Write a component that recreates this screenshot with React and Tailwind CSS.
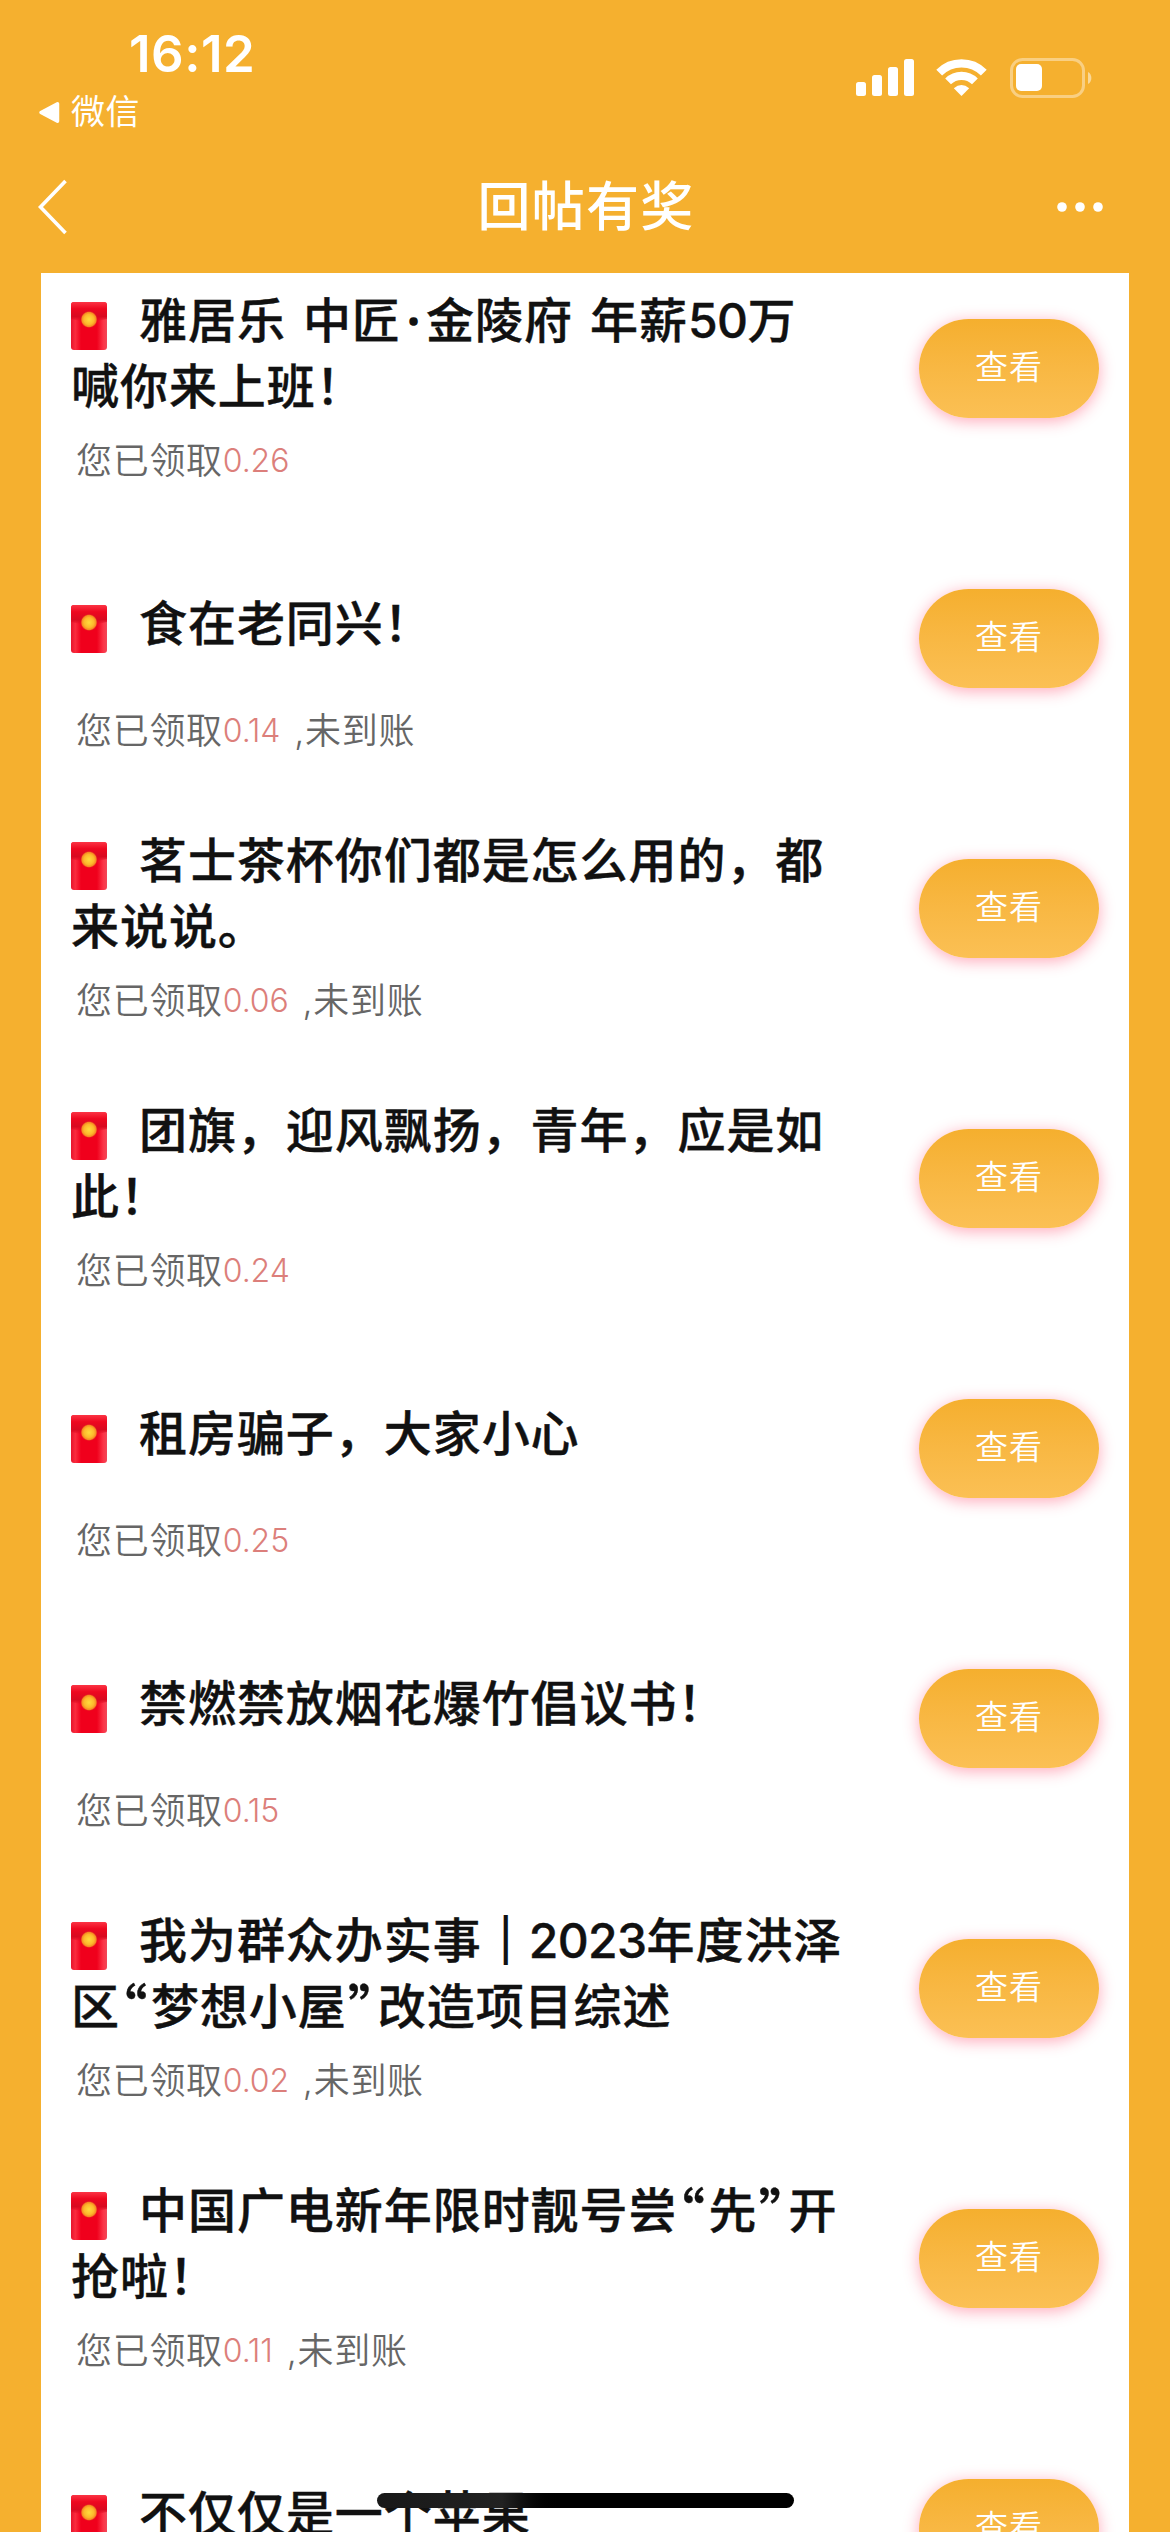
const rows = [
  { lines: ['雅居乐 中匠·金陵府 年薪50万', '喊你来上班！'], amount: '0.26' },
  { lines: ['食在老同兴！'], amount: '0.14', pending: true },
  { lines: ['茗士茶杯你们都是怎么用的，都', '来说说。'], amount: '0.06', pending: true },
  { lines: ['团旗，迎风飘扬，青年，应是如', '此！'], amount: '0.24' },
  { lines: ['租房骗子，大家小心'], amount: '0.25' },
  { lines: ['禁燃禁放烟花爆竹倡议书！'], amount: '0.15' },
  { lines: ['我为群众办实事｜2023年度洪泽', '区“梦想小屋”改造项目综述'], amount: '0.02', pending: true },
  { lines: ['中国广电新年限时靓号尝“先”开', '抢啦！'], amount: '0.11', pending: true },
  { lines: ['不仅仅是一个苹果'] },
];

function Envelope() {
  return (
    <svg className="mt-[14px] mr-[32px] h-[48px] w-[36px] shrink-0" viewBox="0 0 36 48">
      <defs>
        <linearGradient id="envBody" x1="0" x2="1" y1="0" y2="0">
          <stop offset="0" stopColor="#e6142c" />
          <stop offset="0.12" stopColor="#fa2c3e" />
          <stop offset="0.28" stopColor="#f0001c" />
          <stop offset="0.72" stopColor="#f0001c" />
          <stop offset="0.9" stopColor="#fb3447" />
          <stop offset="1" stopColor="#f04858" />
        </linearGradient>
        <linearGradient id="envFlap" x1="0" x2="0" y1="0" y2="1">
          <stop offset="0" stopColor="#fb3444" />
          <stop offset="0.35" stopColor="#ee0820" />
          <stop offset="0.75" stopColor="#d80a20" />
          <stop offset="1" stopColor="#e0081f" stopOpacity="0" />
        </linearGradient>
        <radialGradient id="envCoin">
          <stop offset="0" stopColor="#ffdc3c" />
          <stop offset="0.6" stopColor="#fdb82c" />
          <stop offset="0.85" stopColor="#f68a22" />
          <stop offset="1" stopColor="#e8301c" stopOpacity="0.3" />
        </radialGradient>
      </defs>
      <rect width="36" height="48" rx="3" fill="url(#envBody)" />
      <path d="M3 0H33Q36 0 36 3V17Q18 22 0 17V3Q0 0 3 0Z" fill="url(#envFlap)" />
      <circle cx="18" cy="17.500" r="8.400" fill="url(#envCoin)" />
    </svg>
  );
}

const glyphStyles = {
  '“': "inline-block h-[66px] w-[31px] pr-[3px] text-center align-top text-[54px] tracking-normal font-['Noto_Sans_CJK_SC'] [font-feature-settings:'halt']",
  '”': "inline-block h-[66px] w-[31px] pr-[2px] text-center align-top text-[54px] tracking-normal font-['Noto_Sans_CJK_SC'] [font-feature-settings:'halt']",
  '·': 'inline-block w-[25px] text-center tracking-normal [-webkit-text-stroke:1.5px_#111]',
  '｜': 'inline-block w-[47px] [-webkit-text-stroke:2px_#111]',
};

function TitleText({ text }) {
  return (
    <span>
      {text.split(/([“”·｜]|\d+)/).map((part, i) => (
        <span key={i} className={/^\d+$/.test(part) ? 'tracking-[-0.6px]' : glyphStyles[part]}>
          {part}
        </span>
      ))}
    </span>
  );
}

function Row({ lines, amount, pending }) {
  return (
    <li className="flex h-[270px] shrink-0 justify-between pt-[15px] pr-[30px] pl-[30px]">
      <div className="flex flex-col">
        <h2 className="flex h-[132px] flex-col justify-center text-[48px] leading-[66px] font-medium tracking-[0.95px] whitespace-nowrap text-[#111] [word-spacing:3.5px] [-webkit-text-stroke:0.4px_#111]">
          {lines.map((line, i) => (
            <span key={line} className="flex h-[66px]">
              {i === 0 && <Envelope />}
              <TitleText text={line} />
            </span>
          ))}
        </h2>
        {amount && (
          <p className="mt-[16px] ml-[5px] flex h-[50px] text-[36px] leading-[50px] font-[350] tracking-[0.7px] whitespace-pre text-[#666]">
            <span>您已领取</span>
            <span className="text-[32px] leading-[50px] font-light tracking-[-0.1px] text-[#dc7f7b]">{amount}</span>
            {pending && <span className="ml-[2px] [word-spacing:1px]"> ,未到账</span>}
          </p>
        )}
      </div>
      <button className="mt-[31px] flex h-[99px] w-[180px] items-center justify-center rounded-full bg-linear-to-b from-[#f5af2e] to-[#fbc054] pb-[2px] text-[33px] font-[350] tracking-[1px] text-white shadow-[0_3px_16px_rgba(255,40,80,0.4)]">
        查看
      </button>
    </li>
  );
}

export default function App() {
  return (
    <div className="relative flex h-[2532px] w-[1170px] flex-col overflow-hidden bg-[#f5b02f] font-['Inter','Noto_Sans_CJK_SC',sans-serif]">
      <div className="flex h-[141px] shrink-0 justify-between">
        <div className="flex flex-col pl-[38px] text-white">
          <span className="mt-[22px] ml-[91px] text-[51px] leading-[64px] font-semibold tracking-[0.5px]">16:12</span>
          <div className="mt-[1px] flex h-[50px] items-center">
            <svg className="h-[23px] w-[22px]" viewBox="0 0 22 23">
              <path d="M3 11.5 19.5 2.8V20.2Z" fill="white" stroke="white" strokeWidth="3.5" strokeLinejoin="round" />
            </svg>
            <span className="ml-[11px] text-[34px] leading-[50px] tracking-[0.4px]">微信</span>
          </div>
        </div>
        <div className="mt-[57px] mr-[78px] flex h-[41px] items-center">
          <svg className="h-[37px] w-[58px]" viewBox="0 0 58 37" fill="white">
            <rect y="23" width="10" height="14" rx="2.5" />
            <rect x="16" y="16" width="10" height="21" rx="2.5" />
            <rect x="32" y="8" width="10" height="29" rx="2.5" />
            <rect x="48" width="10" height="37" rx="2.5" />
          </svg>
          <svg className="ml-[22px] h-[37px] w-[51px]" viewBox="0 0 51 37" fill="none" stroke="white">
            <path d="M3.2 13.6A31.5 31.5 0 0 1 47.8 13.6" strokeWidth="8.2" />
            <path d="M12.1 22.4A19 19 0 0 1 38.9 22.4" strokeWidth="8.2" />
            <path d="M25.5 37 17.8 29.2Q25.5 22.6 33.2 29.2Z" fill="white" stroke="none" />
          </svg>
          <svg className="ml-[22px] h-[41px] w-[83px]" viewBox="0 0 83 41">
            <rect x="2.5" y="2.5" width="72" height="37" rx="11" fill="none" stroke="white" strokeOpacity="0.4" strokeWidth="3" />
            <rect x="7" y="7" width="26" height="27" rx="5" fill="white" />
            <path d="M79 15C83.500 17 83.500 25 79 27Z" fill="white" fillOpacity="0.5" />
          </svg>
        </div>
      </div>
      <header className="flex h-[132px] shrink-0 items-center justify-between pr-[67px] pl-[37px] text-white">
        <svg className="h-[56px] w-[78px]" viewBox="0 0 78 56" fill="none" stroke="white" strokeWidth="3.6">
          <path d="M28.500 2 3.500 28 28.500 54" />
        </svg>
        <h1 className="text-[53px] leading-[80px] font-medium tracking-[1.2px]">回帖有奖</h1>
        <svg className="h-[10px] w-[46px]" viewBox="0 0 46 10" fill="white">
          <circle cx="5" cy="5" r="4.800" />
          <circle cx="23" cy="5" r="4.800" />
          <circle cx="41" cy="5" r="4.800" />
        </svg>
      </header>
      <ul className="mr-[41px] ml-[41px] flex h-[2259px] flex-col overflow-hidden bg-white">
        {rows.map((row) => (
          <Row key={row.lines[0]} {...row} />
        ))}
      </ul>
      <div className="absolute bottom-[24px] left-[377px] h-[15px] w-[417px] rounded-full bg-linear-to-r from-[#181818] via-[#222] via-30% to-black to-45%" />
    </div>
  );
}
